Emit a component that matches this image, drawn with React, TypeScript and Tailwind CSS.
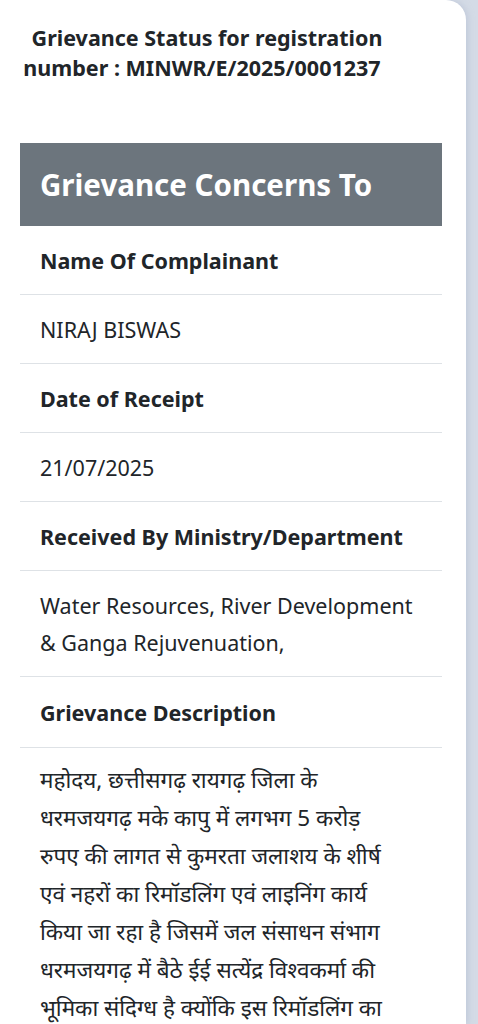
import React from "react";

const font = { fontFamily: '"Noto Sans", "Noto Sans Devanagari", "Noto Sans CJK SC", sans-serif' };

function Row({ children, bold }: { children: React.ReactNode; bold?: boolean }) {
  return (
    <div
      className={`border-b border-[#dee2e6] px-5 py-[15.5px] text-[21.5px] leading-[37px] text-[#212529] ${bold ? "font-bold" : "font-normal"}`}
    >
      {children}
    </div>
  );
}

const hindi = [
  "महोदय, छत्तीसगढ़ रायगढ़ जिला के",
  "धरमजयगढ़ मके कापु में लगभग 5 करोड़",
  "रुपए की लागत से कुमरता जलाशय के शीर्ष",
  "एवं नहरों का रिमॉडलिंग एवं लाइनिंग कार्य",
  "किया जा रहा है जिसमें जल संसाधन संभाग",
  "धरमजयगढ़ में बैठे ईई सत्येंद्र विश्वकर्मा की",
  "भूमिका संदिग्ध है क्योंकि इस रिमॉडलिंग का",
];

export default function App() {
  return (
    <div className="flex h-[1024px] w-[478px] overflow-hidden bg-[#d4dbe6]" style={font}>
      <div className="w-[466px] shrink-0 rounded-tr-[20px] bg-white shadow-[2px_0_6px_rgba(180,190,210,0.6)]">
        <div className="w-[404px] pt-[23px] text-center text-[21.5px] font-bold leading-[30px] text-[#212529]">
          <span className="pl-[10px]">Grievance Status for registration</span>
          <br />
          number : MINWR/E/2025/0001237
        </div>
        <div className="ml-5 mt-[60px] w-[422px]">
          <div className="bg-[#6c757d] px-5 pb-[21px] pt-[22px] text-[29.5px] font-bold leading-[40px] text-white">
            Grievance Concerns To
          </div>
          <Row bold>Name Of Complainant</Row>
          <Row>NIRAJ BISWAS</Row>
          <Row bold>Date of Receipt</Row>
          <Row>21/07/2025</Row>
          <Row bold>Received By Ministry/Department</Row>
          <Row>
            Water Resources, River Development
            <br />
            &amp; Ganga Rejuvenuation,
          </Row>
          <div className="border-b border-[#dee2e6] px-5 pb-[16px] pt-[17px] text-[21.5px] font-bold leading-[37px] text-[#212529]">
            Grievance Description
          </div>
          <div className="px-5 pb-4 pt-[13px] text-[22.5px] leading-[38px] text-[#212529]">
            {hindi.map((l, i) => (
              <span key={i} className="block whitespace-nowrap">
                {l}
              </span>
            ))}
          </div>
        </div>
      </div>
    </div>
  );
}
